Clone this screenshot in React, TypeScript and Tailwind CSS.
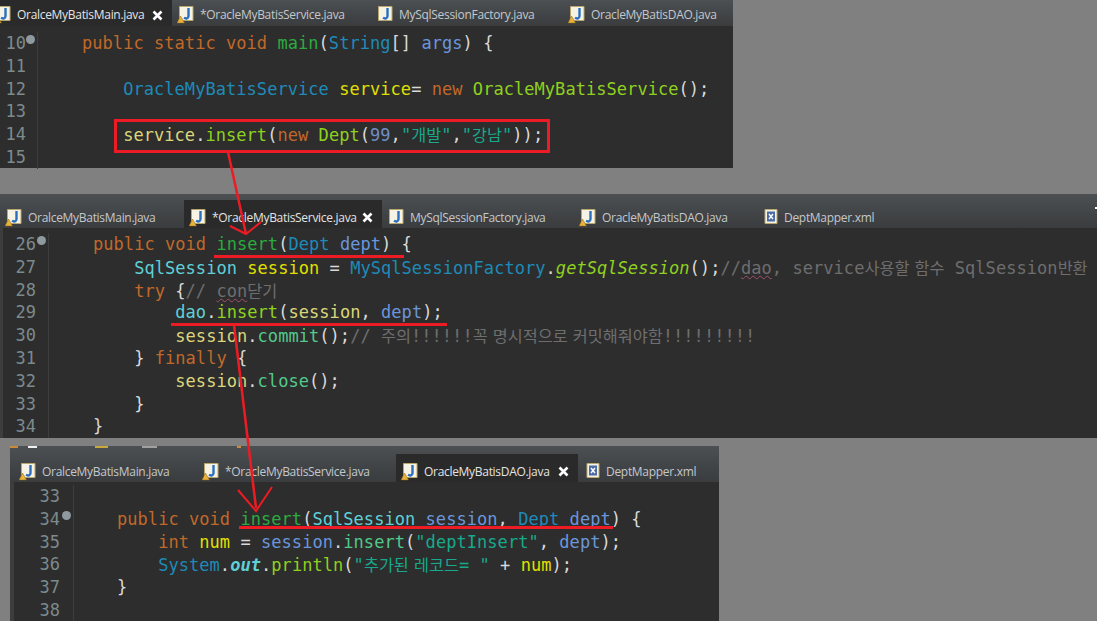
import type { ReactNode } from "react";

const mono = "font-['DejaVu_Sans_Mono','Noto_Sans_CJK_KR',monospace]";

const c = {
  kw: "text-[#c0692a]",
  method: "text-[#2bab3f]",
  type: "text-[#1e8ab8]",
  param: "text-[#6a96dc]",
  plain: "text-[#d9d9d9]",
  local: "text-[#e0e000]",
  var: "text-[#dcd67a]",
  lime: "text-[#8fd11f]",
  call: "text-[#52c98a]",
  str: "text-[#17a98c]",
  field: "text-[#5fd0d8]",
  cmt: "text-[#6e6e6e]",
  num: "text-[#6f8fc8]",
};

type Seg = [string, string];

function JavaIcon({ warn = true, xml = false }: { warn?: boolean; xml?: boolean }) {
  return (
    <svg width="18" height="18" viewBox="0 0 18 18" className="shrink-0">
      <path d={xml ? "M4 0.500h12v14H4z" : "M2.500 0.500h13.500v14H2.500z"} fill="#f6f3e4" stroke="#b9a66f" />
      {xml ? (
        <rect x="6" y="2.500" width="8" height="10" fill="#4a6aa8" />
      ) : (
        <path d="M11.500 2v8c0 2.500-2.500 3-4.500 1.800" fill="none" stroke="#2a6fc0" strokeWidth="2.400" />
      )}
      {xml && <path d="M8 5l4 5M12 5l-4 5" stroke="#fff" strokeWidth="1.400" />}
      {warn && <path d="M3.500 10L7.500 17H0z" fill="#e9b23c" stroke="#8a6414" strokeWidth="0.500" />}
    </svg>
  );
}

function Tab({
  name,
  width,
  active,
  warn = true,
  xml,
  compact,
}: {
  name: string;
  width: number;
  active?: boolean;
  warn?: boolean;
  xml?: boolean;
  compact?: boolean;
}) {
  return (
    <div
      style={{ width }}
      className={`flex h-full shrink-0 items-center gap-[5px] pl-[5px] font-['Open_Sans',sans-serif] text-[12px] tracking-[-0.3px] ${
        compact ? "pt-[4px]" : "pt-[7px]"
      } ${active ? "bg-[#2a2a2a] text-[#e4e4e4]" : "text-[#c4c8cc]"}`}
    >
      <JavaIcon warn={warn} xml={xml} />
      <span className="whitespace-nowrap">{name}</span>
      {active && (
        <svg width="11" height="11" viewBox="0 0 11 11" className="ml-auto mr-[9px] shrink-0">
          <path d="M1.500 1.500l8 8M9.500 1.500l-8 8" stroke="#fff" strokeWidth="2.600" />
        </svg>
      )}
    </div>
  );
}

// hangul is proportional in the editor, with a narrow space between words
function Hangul({ text }: { text: string }) {
  return (
    <>
      {text.split(/([가-힣]+(?: [가-힣]+)*)/).map((part, i) =>
        i % 2 === 1 ? (
          <span key={i} className="font-['Noto_Sans_CJK_KR',sans-serif] text-[16.300px] tracking-normal [word-spacing:1.500px]">
            {part}
          </span>
        ) : (
          part
        ),
      )}
    </>
  );
}

function Line({
  no,
  fold,
  segs,
  indent,
  gutter,
  pr,
  children,
}: {
  no: number;
  fold?: boolean;
  segs: Seg[];
  indent: number;
  gutter: number;
  pr: number;
  children?: ReactNode;
}) {
  return (
    <div className="flex h-[22.800px] leading-[22.800px]">
      <div
        style={{ width: gutter, paddingRight: pr }}
        className="relative shrink-0 border-r border-[#3d3d3d] text-right text-[#7c8a8c]"
      >
        {no}
        {fold && (
          <span className="absolute right-[2px] top-[3px] h-[9px] w-[9px] rounded-full bg-[#8e9aa0]" />
        )}
      </div>
      <div style={{ paddingLeft: indent }} className="whitespace-pre">
        {segs.map(([cls, t], i) => (
          <span key={i} className={cls}>
            <Hangul text={t} />
          </span>
        ))}
        {children}
      </div>
    </div>
  );
}

const p = c.plain;
const wavy = `${c.cmt} underline decoration-[#a0506a] decoration-wavy decoration-1`;
const barBg = "bg-linear-to-b from-[#4c5053] to-[#3a3c3e]";

export default function App() {
  const w1 = { gutter: 38, pr: 11, indent: 44 };
  const w2 = { gutter: 46, pr: 12, indent: 44 };
  const w3 = { gutter: 60, pr: 13, indent: 43 };

  return (
    <div className="relative flex h-[621px] w-[1097px] flex-col overflow-hidden bg-[#808080]">
      {/* main */}
      <div className="flex h-[168px] w-[733px] flex-col bg-[#2d2d2d]">
        <div className={`flex h-[26px] shrink-0 ${barBg}`}>
          <div className="-ml-[11px] flex h-full">
            <Tab compact name="OralceMyBatisMain.java" width={183} active />
            <Tab compact name="*OracleMyBatisService.java" width={199} />
            <Tab compact name="MySqlSessionFactory.java" width={192} warn={false} />
            <Tab compact name="OracleMyBatisDAO.java" width={170} />
          </div>
        </div>
        <div className={`${mono} pt-[6px] text-[17px] tracking-[0.050px]`}>
          <Line no={10} fold {...w1} segs={[[c.kw, "public static void "], [c.method, "main"], [p, "("], [c.type, "String"], [p, "[] "], [c.param, "args"], [p, ") {"]]} />
          <Line no={11} {...w1} segs={[]} />
          <Line no={12} {...w1} segs={[[c.type, "    OracleMyBatisService "], [c.local, "service"], [p, "= "], [c.kw, "new "], [c.lime, "OracleMyBatisService"], [p, "();"]]} />
          <Line no={13} {...w1} segs={[]} />
          <Line no={14} {...w1} segs={[[c.var, "    service"], [p, "."], [c.lime, "insert"], [p, "("], [c.kw, "new "], [c.lime, "Dept"], [p, "("], [c.num, "99"], [p, ","], [c.str, "\"개발\""], [p, ","], [c.str, "\"강남\""], [p, "));"]]} />
          <Line no={15} {...w1} segs={[]} />
        </div>
      </div>

      {/* service */}
      <div className="mt-[26px] flex h-[244px] w-full flex-col bg-[#2d2d2d]">
        <div className={`flex h-[34px] shrink-0 items-end pt-[6px] ${barBg}`}>
          <div className="flex h-[28px] w-full">
            <Tab name="OralceMyBatisMain.java" width={184} />
            <Tab name="*OracleMyBatisService.java" width={198} active />
            <Tab name="MySqlSessionFactory.java" width={192} warn={false} />
            <Tab name="OracleMyBatisDAO.java" width={182} />
            <Tab name="DeptMapper.xml" width={150} warn={false} xml />
          </div>
        </div>
        <div className={`${mono} border-l-[3px] border-[#3d3d3d] pt-[5px] text-[17px] tracking-[0.050px]`}>
          <Line no={26} fold {...w2} segs={[[c.kw, "public void "], [c.method, "insert"], [p, "("], [c.type, "Dept "], [c.param, "dept"], [p, ") {"]]} />
          <Line no={27} {...w2} segs={[[c.field, "    SqlSession "], [c.local, "session"], [p, " = "], [c.type, "MySqlSessionFactory"], [p, "."], ["italic text-[#8fd11f]", "getSqlSession"], [p, "();"], [c.cmt, "//"]]}>
            <span className={wavy}>dao</span>
            <span className={c.cmt}>
              <Hangul text=", service사용할 함수 SqlSession반환" />
            </span>
          </Line>
          <Line no={28} {...w2} segs={[[c.kw, "    try "], [p, "{"], [c.cmt, "// "]]}>
            <span className={wavy}>con</span>
            <span className={c.cmt}>
              <Hangul text="닫기" />
            </span>
          </Line>
          <Line no={29} {...w2} segs={[[c.field, "        dao"], [p, "."], [c.lime, "insert"], [p, "("], [c.var, "session"], [p, ", "], [c.param, "dept"], [p, ");"]]} />
          <Line no={30} {...w2} segs={[[c.var, "        session"], [p, "."], [c.call, "commit"], [p, "();"], [c.cmt, "// 주의!!!!!!꼭 명시적으로 커밋해줘야함!!!!!!!!!"]]} />
          <Line no={31} {...w2} segs={[[p, "    } "], [c.kw, "finally "], [p, "{"]]} />
          <Line no={32} {...w2} segs={[[c.var, "        session"], [p, "."], [c.call, "close"], [p, "();"]]} />
          <Line no={33} {...w2} segs={[[p, "    }"]]} />
          <Line no={34} {...w2} segs={[[p, "}"]]} />
        </div>
      </div>

      {/* dao */}
      <div className="ml-[10px] mt-[8px] flex h-[175px] w-[709px] flex-col overflow-hidden bg-[#2d2d2d]">
        <div className={`flex h-[36px] shrink-0 flex-col pl-[4px] ${barBg}`}>
          {/* bits of the toolbar left over from the crop */}
          <div className="-ml-[4px] flex h-[2px] shrink-0">
            <span className="h-full w-[8px] bg-[#c98a3a]" />
            <span className="ml-[10px] h-full w-[9px] bg-[#f0f0f0]" />
            <span className="ml-[58px] h-full w-[13px] bg-[#c9a93a]" />
            <span className="ml-[34px] h-full w-[15px] bg-[#a0a0a0]" />
            <span className="ml-[80px] h-full w-[4px] bg-[#c98a3a]" />
          </div>
          <div className="mt-auto flex h-[28px] w-full">
            <Tab name="OralceMyBatisMain.java" width={183} />
            <Tab name="*OracleMyBatisService.java" width={199} />
            <Tab name="OracleMyBatisDAO.java" width={182} active />
            <Tab name="DeptMapper.xml" width={130} warn={false} xml />
          </div>
        </div>
        <div className={`${mono} border-l-[4px] border-[#3d3d3d] pt-[3px] text-[17px] tracking-[0.050px]`}>
          <Line no={33} {...w3} segs={[]} />
          <Line no={34} fold {...w3} segs={[[c.kw, "public void "], [c.method, "insert"], [p, "("], [c.field, "SqlSession "], [c.param, "session"], [p, ", "], [c.type, "Dept "], [c.param, "dept"], [p, ") {"]]} />
          <Line no={35} {...w3} segs={[[c.kw, "    int "], [c.local, "num"], [p, " = "], [c.param, "session"], [p, "."], [c.call, "insert"], [p, "("], [c.str, "\"deptInsert\""], [p, ", "], [c.param, "dept"], [p, ");"]]} />
          <Line no={36} {...w3} segs={[[c.type, "    System"], [p, "."], ["font-bold italic text-[#5fd0d8]", "out"], [p, "."], [c.lime, "println"], [p, "("], [c.str, "\"추가된 레코드= \""], [p, " + "], [c.local, "num"], [p, ");"]]} />
          <Line no={37} {...w3} segs={[[p, "}"]]} />
          <Line no={38} {...w3} segs={[]} />
        </div>
      </div>

      {/* annotations over the screenshots */}
      <div className="absolute left-[114px] top-[119px] h-[34px] w-[436px] border-[3px] border-[#ed1c24]" />
      <div className="absolute left-[214px] top-[255px] h-[3px] w-[190px] bg-[#ed1c24]" />
      <div className="absolute left-[171px] top-[323px] h-[3px] w-[276px] bg-[#ed1c24]" />
      <div className="absolute left-[239px] top-[526px] h-[3px] w-[374px] bg-[#ed1c24]" />
      <div className="absolute left-[1095px] top-[207px] h-[2px] w-[2px] bg-white" />
      <svg className="absolute left-0 top-0" width="1097" height="621" viewBox="0 0 1097 621" fill="none" stroke="#ed1c24">
        <path d="M228 152L246 234" strokeWidth="2.500" />
        <path d="M230 226L246 234L261 222" strokeWidth="2" />
        <path d="M234 325L256 508" strokeWidth="2.500" />
        <path d="M238 490L256 511L272 487" strokeWidth="2" />
      </svg>
    </div>
  );
}
